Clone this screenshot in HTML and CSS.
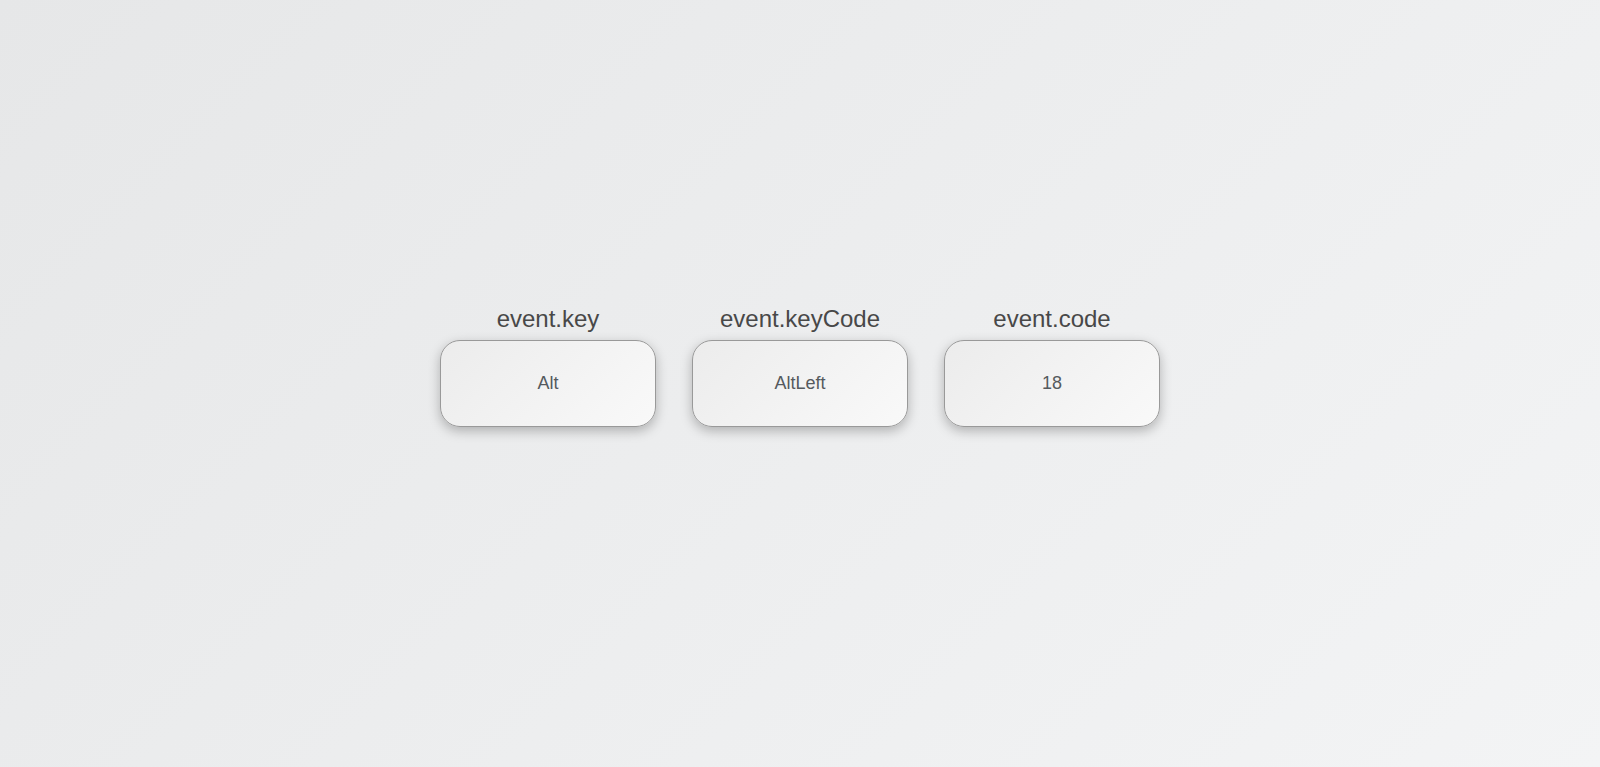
FILE: index.html
```html
<!DOCTYPE html>
<html>
<head>
<meta charset="utf-8">
<link rel="stylesheet" href="styles.css">
</head>
<body>
<main class="stage">
  <div class="keys">
    <div class="key">
      <div class="key-label">event.key</div>
      <div class="key-box">Alt</div>
    </div>
    <div class="key">
      <div class="key-label">event.keyCode</div>
      <div class="key-box">AltLeft</div>
    </div>
    <div class="key">
      <div class="key-label">event.code</div>
      <div class="key-box">18</div>
    </div>
  </div>
</main>
</body>
</html>
```

FILE: styles.css
```css
html, body {
  margin: 0;
  height: 100%;
}
body {
  background: linear-gradient(135deg, #e6e7e8 0%, #f3f4f5 100%);
  font-family: "Liberation Sans", Arial, sans-serif;
}
.stage {
  height: 100vh;
  box-sizing: border-box;
  display: flex;
  align-items: center;
  justify-content: center;
  padding-bottom: 36px;
}
.keys {
  display: flex;
  gap: 36px;
}
.key {
  display: flex;
  flex-direction: column;
  align-items: center;
  gap: 8px;
}
.key-label {
  font-size: 24px;
  color: #484848;
  line-height: 27px;
}
.key-box {
  width: 214px;
  height: 85px;
  border: 1px solid #999;
  border-radius: 20px;
  background: linear-gradient(135deg, #ececec 0%, #f9f9f9 100%);
  box-shadow: 0 4px 12px rgba(0, 0, 0, 0.26);
  display: flex;
  align-items: center;
  justify-content: center;
  font-size: 18px;
  color: #555a5e;
}
```
